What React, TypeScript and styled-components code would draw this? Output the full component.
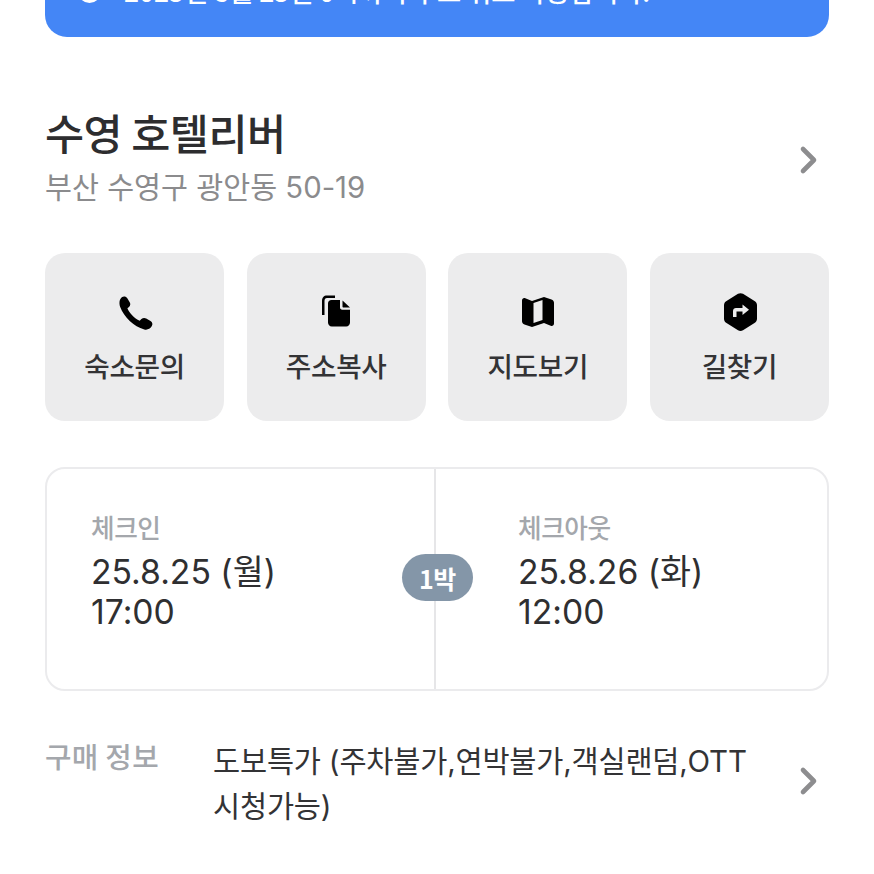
import React from "react";
import styled, { createGlobalStyle } from "styled-components";

const Global = createGlobalStyle`
  html, body { margin: 0; padding: 0; background: #fff; }
  body { width: 874px; height: 874px; overflow: hidden; font-family: "Noto Sans CJK KR", "Inter", sans-serif; color: #2b2b2d; }
`;
const Page = styled.div`
  width: 874px; height: 874px; overflow: hidden; padding: 0 45px; box-sizing: border-box;
`;
const Banner = styled.div`
  margin-top: -60px; height: 97px; box-sizing: border-box; background: #4486f6; border-radius: 0 0 22px 22px;
  display: flex; align-items: flex-start; gap: 23px; padding: 36px 0 0 33px; color: #fff;
  font-size: 26.300px; line-height: 30px; font-weight: 500;
`;
const Dot = styled.span`
  width: 23px; height: 23px; margin-top: 4px; border-radius: 50%; background: #fff; flex: none;
`;
const Head = styled.div`
  display: flex; justify-content: space-between; align-items: center; margin-top: 66px; height: 104px;
`;
const Title = styled.h1`
  margin: 0; font-size: 42.500px; line-height: 60px; font-weight: 500; letter-spacing: -0.5px; color: #2d2d2f;
`;
const Address = styled.div`
  font-size: 29.300px; line-height: 40px; margin-top: 6px; color: #8b8b8d; font-family: "Inter", "Noto Sans CJK KR", sans-serif;
`;
const Actions = styled.div`
  display: grid; grid-template-columns: repeat(4, 1fr); gap: 22.400px; margin-top: 46px;
`;
const Action = styled.div`
  height: 168px; background: #ececed; border-radius: 20px; display: flex; flex-direction: column; align-items: center; padding-top: 40px; box-sizing: border-box;
`;
const ActionIcon = styled.svg`
  width: 38px; height: 38px; display: block; color: #000;
`;
const ActionLabel = styled.div`
  font-size: 27.700px; line-height: 38px; font-weight: 500; margin-top: 15px; color: #333335; letter-spacing: -0.3px;
`;
const Stay = styled.div`
  position: relative; margin-top: 46px; height: 224px; box-sizing: border-box; border: 2px solid #ebebed; border-radius: 20px; display: grid; grid-template-columns: 389px 1fr;
`;
const Side = styled.div<{ $first?: boolean }>`
  padding: 42px 0 0 ${(p) => (p.$first ? 44 : 82)}px;
  ${(p) => (p.$first ? "border-right: 2px solid #e6e6e8;" : "")}
`;
const SideLabel = styled.div`
  font-size: 25.700px; line-height: 32px; color: #a4a7ac; font-weight: 500; letter-spacing: -0.5px;
`;
const SideValue = styled.div`
  font-size: 33.700px; line-height: 40px; margin-top: 9px; color: #2f2f31; font-family: "Inter", "Noto Sans CJK KR", sans-serif; font-weight: 400;
`;
const Nights = styled.div`
  position: absolute; left: 355px; top: 85px; width: 71px; height: 47px; border-radius: 24px; background: #8496a8; color: #fff;
  display: flex; align-items: center; justify-content: center; font-size: 25px; font-weight: 700; letter-spacing: -0.5px;
`;
const Info = styled.div`
  display: grid; grid-template-columns: 169px 1fr 28px; margin-top: 48px; align-items: center;
`;
const InfoLabel = styled.div`
  align-self: start; font-size: 28.800px; line-height: 38px; color: #a4a7ac; font-weight: 500; letter-spacing: 0.3px; margin-top: -2px;
`;
const InfoValue = styled.div`
  font-size: 29.500px; line-height: 45px; color: #333335; font-family: "Inter", "Noto Sans CJK KR", sans-serif; letter-spacing: -0.2px; margin-left: -1px;
`;
const Chevron = styled.svg`
  width: 24px; height: 32px; display: block; color: #8d8d8f; justify-self: end; margin: 10px 8px 0 0; flex: none;
`;
const InfoChevron = styled(Chevron)`
  margin-top: -6px;
`;

const chevronProps = {
  viewBox: "0 0 24 32", fill: "none", stroke: "currentColor", strokeWidth: "4.600",
  strokeLinecap: "round" as const, strokeLinejoin: "round" as const,
};
const chevronPath = <path d="M6 5 17 16 6 27" />;

export default function App() {
  return (
    <Page>
      <Global />
      <Banner>
        <Dot />
        <span>2025년 8월 25일 0시까지 무료 취소 가능합니다.</span>
      </Banner>
      <Head>
        <div>
          <Title>수영 호텔리버</Title>
          <Address>부산 수영구 광안동 50-19</Address>
        </div>
        <Chevron {...chevronProps}>{chevronPath}</Chevron>
      </Head>
      <Actions>
        <Action>
          <ActionIcon viewBox="-2 -2 38 38" fill="currentColor">
            <path d="M3.800 2.300C5.600.900 8 1.200 9.300 3.300l2.400 4c1 1.700.7 3.500-.7 4.700l-1.600 1.300c1.700 4.500 6.900 10.200 12.300 12.400l1.700-1.600c1.400-1.300 3.200-1.500 4.800-.6l4.300 2.500c2 1.200 2.500 3.400 1.200 5.300-1.700 2.700-4.500 3.900-7.400 3.100C15.900 32 5.900 21.900 2.200 12.100 1 8.400 1.200 4.500 3.800 2.300Z" />
          </ActionIcon>
          <ActionLabel>숙소문의</ActionLabel>
        </Action>
        <Action>
          <ActionIcon viewBox="0 0 38 38" fill="currentColor">
            <path d="M5 22V8C5 4.500 6.800 2.500 10 2.500h8V5h-8C8.400 5 7.500 6.200 7.500 8v14Z" />
            <path d="M11 10.500c0-2.200 1.400-3.500 3.500-3.500H23v7.500c0 1.300.9 2.200 2.200 2.200H33v12.800c0 2.300-1.600 4-3.800 4H14.800c-2.200 0-3.800-1.700-3.800-4Z" />
            <path d="M25.500 7.500 33 14.500h-6.500c-.6 0-1-.4-1-1Z" />
          </ActionIcon>
          <ActionLabel>주소복사</ActionLabel>
        </Action>
        <Action>
          <ActionIcon viewBox="0 0 38 38" fill="currentColor">
            <path fillRule="evenodd" d="M3 7.500C3 5.700 4.600 4.600 6.300 5.300L13 8l12-4 7.500 2.500c1.500.5 2.500 1.700 2.500 3.300v20.700c0 1.800-1.600 2.900-3.300 2.200L25 30l-12 4-7.500-2.500C4 31 3 29.800 3 28.200ZM14.500 10v20l9-3V7Z" />
          </ActionIcon>
          <ActionLabel>지도보기</ActionLabel>
        </Action>
        <Action>
          <ActionIcon viewBox="-1.500 0 38 38" fill="currentColor">
            <path fillRule="evenodd" d="M16.500.800c1.600-.9 3.400-.9 5 0l11.500 7.200c1.600.9 2.500 2.500 2.500 4.300v13.400c0 1.800-1 3.400-2.500 4.300l-11.500 7.200c-1.600.9-3.400.9-5 0L5 30c-1.600-.9-2.500-2.500-2.500-4.300V12.300C2.500 10.500 3.400 8.900 5 8Z M21 11.500v3.500h-6.500c-1.700 0-3 1.300-3 3v6h3.500v-5.500H21V22l6.500-5.200Z" />
          </ActionIcon>
          <ActionLabel>길찾기</ActionLabel>
        </Action>
      </Actions>
      <Stay>
        <Side $first>
          <SideLabel>체크인</SideLabel>
          <SideValue>25.8.25 (월)<br />17:00</SideValue>
        </Side>
        <Side>
          <SideLabel>체크아웃</SideLabel>
          <SideValue>25.8.26 (화)<br />12:00</SideValue>
        </Side>
        <Nights>1박</Nights>
      </Stay>
      <Info>
        <InfoLabel>구매 정보</InfoLabel>
        <InfoValue>도보특가 (주차불가,연박불가,객실랜덤,OTT<br />시청가능)</InfoValue>
        <InfoChevron {...chevronProps}>{chevronPath}</InfoChevron>
      </Info>
    </Page>
  );
}
